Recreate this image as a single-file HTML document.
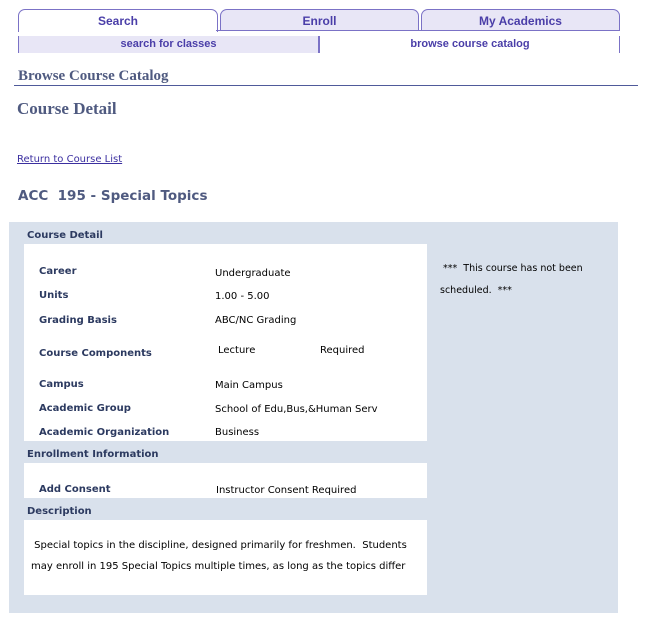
<!DOCTYPE html>
<html><head><style>
body{margin:0;width:664px;height:632px;background:#fff;position:relative;font-family:"DejaVu Sans",Verdana,sans-serif;overflow:hidden}
div,span,a{position:absolute}
.tab{top:9px;height:21px;border:1px solid #7b72c6;border-bottom:none;border-radius:7px 7px 0 0;background:#e8e6f6;font:bold 12px "Liberation Sans",Arial,sans-serif;color:#4a3ea8;text-align:center;line-height:22px}
.sub{top:36px;height:17px;font:bold 11px "Liberation Sans",Arial,sans-serif;color:#4a3ea8;text-align:center;line-height:17px}
.h{font-family:"Liberation Serif",serif;font-weight:bold;color:#4f5a80}
.lbl{font-size:10px;font-weight:bold;color:#2c3a60}
.val{font-size:10px;color:#000}
.sec{font-size:10px;font-weight:bold;color:#2c3a60}
.wb{background:#fff}
</style></head><body>
<div class="tab" style="left:18px;width:198px;background:#fff;height:22px">Search</div>
<div class="tab" style="left:220px;width:197px">Enroll</div>
<div class="tab" style="left:421px;width:197px">My Academics</div>
<div style="left:216px;top:30px;width:403px;height:1px;background:#7b72c6"></div>
<div class="sub" style="left:18px;width:299px;background:#e8e6f6;border-left:1px solid #7b72c6;border-right:2px double #7b72c6">search for classes</div>
<div class="sub" style="left:321px;width:298px;border-right:1px solid #7b72c6">browse course catalog</div>
<div class="h" style="left:18px;top:68px;font-size:15px">Browse Course Catalog</div>
<div style="left:14px;top:85px;width:624px;height:1px;background:#4f5a9a"></div>
<div class="h" style="left:17px;top:99px;font-size:17px">Course Detail</div>
<a style="left:17px;top:154px;font-size:10px;color:#3b2fa0;text-decoration:underline">Return to Course List</a>
<div style="left:18px;top:188px;font-size:13.5px;font-weight:bold;color:#4f5a80">ACC&nbsp; 195 - Special Topics</div>
<div style="left:9px;top:222px;width:609px;height:391px;background:#d9e1ec"></div>
<div class="sec" style="left:27px;top:230px">Course Detail</div>
<div class="wb" style="left:24px;top:244px;width:403px;height:197px"></div>
<div class="lbl" style="left:39px;top:266px">Career</div><div class="val" style="left:215px;top:268px">Undergraduate</div>
<div class="lbl" style="left:39px;top:290px">Units</div><div class="val" style="left:215px;top:291px">1.00 - 5.00</div>
<div class="lbl" style="left:39px;top:315px">Grading Basis</div><div class="val" style="left:215px;top:315px">ABC/NC Grading</div>
<div class="lbl" style="left:39px;top:348px">Course Components</div><div class="val" style="left:218px;top:345px">Lecture</div><div class="val" style="left:320px;top:345px">Required</div>
<div class="lbl" style="left:39px;top:379px">Campus</div><div class="val" style="left:215px;top:380px">Main Campus</div>
<div class="lbl" style="left:39px;top:403px">Academic Group</div><div class="val" style="left:215px;top:404px">School of Edu,Bus,&amp;Human Serv</div>
<div class="lbl" style="left:39px;top:427px">Academic Organization</div><div class="val" style="left:215px;top:427px">Business</div>
<div class="val" style="left:440px;top:258px;font-size:9.5px;line-height:22px;width:170px">&nbsp;***&nbsp; This course has not been scheduled.&nbsp; ***</div>
<div class="sec" style="left:27px;top:449px">Enrollment Information</div>
<div class="wb" style="left:24px;top:463px;width:403px;height:35px"></div>
<div class="lbl" style="left:39px;top:484px">Add Consent</div><div class="val" style="left:216px;top:485px">Instructor Consent Required</div>
<div class="sec" style="left:27px;top:506px">Description</div>
<div class="wb" style="left:24px;top:520px;width:403px;height:75px"></div>
<div class="val" style="left:31px;top:535px;width:395px;line-height:21px">&nbsp;Special topics in the discipline, designed primarily for freshmen.&nbsp; Students may enroll in 195 Special Topics multiple times, as long as the topics differ</div>
</body></html>
